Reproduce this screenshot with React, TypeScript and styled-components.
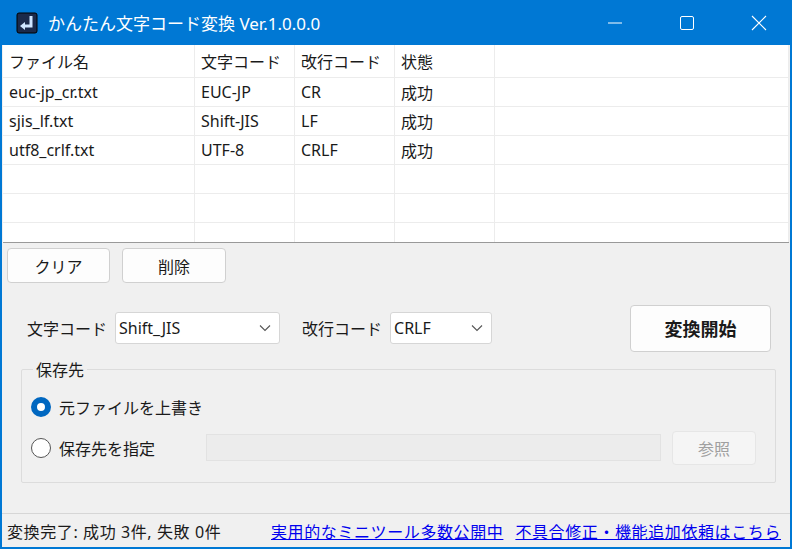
import styled, { createGlobalStyle } from "styled-components";

const Global = createGlobalStyle`
  html, body { margin: 0; padding: 0; }
  body {
    width: 792px; height: 549px; overflow: hidden;
    background: #0078d4;
    font-family: "Segoe UI", "Noto Sans", "Noto Sans CJK JP", sans-serif;
    font-size: 16px; color: #1a1a1a;
  }
`;

const Window = styled.div`
  width: 792px; height: 549px;
  display: flex; flex-direction: column;
  box-sizing: border-box;
  padding: 0 2px 2px 2px;
`;

const TitleBar = styled.div`
  height: 45px; display: flex; align-items: center;
  color: #fff; font-size: 17px; padding-left: 14px; gap: 10px;
`;

const TitleText = styled.div` flex: 1; `;

const WinBtn = styled.div`
  width: 62px; height: 45px; display: flex; align-items: center; justify-content: center;
`;

const Client = styled.div`
  flex: 1; background: #f0f0f0; display: flex; flex-direction: column;
`;

const Table = styled.div`
  height: 197px; background: #fff; border-bottom: 1px solid #999;
  margin-left: 1px; margin-right: 1px;
  display: grid;
  grid-template-columns: 192px 100px 100px 100px 1fr;
  grid-template-rows: 33px;
  grid-auto-rows: 29px;
  overflow: hidden;
`;

const Cell = styled.div`
  border-right: 1px solid #ececec; border-bottom: 1px solid #ececec;
  padding-left: 6px; display: flex; align-items: center;
  box-sizing: border-box;
`;

const Row = styled.div` display: contents; `;

const BtnRow = styled.div` display: flex; gap: 12px; padding: 5px 0 0 5px; `;

const Button = styled.button<{ $w: number; $h?: number; $bold?: boolean; $disabled?: boolean }>`
  width: ${({ $w }) => $w}px; height: ${({ $h }) => $h ?? 35}px;
  background: ${({ $disabled }) => ($disabled ? "#f5f5f5" : "#fdfdfd")};
  border: 1px solid ${({ $disabled }) => ($disabled ? "#e6e6e6" : "#d0d0d0")};
  border-radius: 4px; font-family: inherit;
  font-size: ${({ $bold }) => ($bold ? "18px" : "16px")};
  font-weight: ${({ $bold }) => ($bold ? 700 : 400)};
  color: ${({ $disabled }) => ($disabled ? "#a0a0a0" : "#1a1a1a")};
  padding: 0;
`;

const OptRow = styled.div`
  display: flex; align-items: center; padding: 22px 0 0 25px; height: 46px;
`;

const Label = styled.span<{ $ml?: number }>` margin-left: ${({ $ml }) => $ml ?? 0}px; margin-right: 8px; `;

const Select = styled.div<{ $w: number }>`
  width: ${({ $w }) => $w}px; height: 32px; box-sizing: border-box;
  background: #fff; border: 1px solid #d6d6d6; border-radius: 3px;
  display: flex; align-items: center; justify-content: space-between;
  padding: 0 8px 0 3px;
`;

const Group = styled.fieldset`
  margin: 6px 14px 0 19px; border: 1px solid #dcdcdc; border-radius: 2px;
  padding: 10px 0 14px 9px; height: 100px;
  display: flex; flex-direction: column; gap: 10px;
  legend { padding: 0 3px; margin-left: 2px; }
`;

const RadioRow = styled.div` display: flex; align-items: center; height: 31px; `;

const Radio = styled.span<{ $on?: boolean }>`
  width: 20px; height: 20px; border-radius: 50%; box-sizing: border-box;
  margin-right: 8px;
  ${({ $on }) => ($on ? "border: 6px solid #0067c0; background: #fff;" : "border: 1px solid #555; background: #fff;")}
`;

const PathInput = styled.div`
  width: 455px; height: 27px; margin-left: 51px; margin-right: 11px;
  background: #ececec; border: 1px solid #e2e2e2; box-sizing: border-box;
`;

const Spacer = styled.div` flex: 1; `;

const Status = styled.div`
  height: 33px; border-top: 1px solid #d6d6d6; display: flex; align-items: center;
  padding-left: 5px; gap: 12px;
`;

const StatusText = styled.span` width: 252px; letter-spacing: 0.6px; `;

const Link = styled.a` color: #0000ee; text-decoration: underline; letter-spacing: 0.6px; `;

const Chevron = () => (
  <svg width="12" height="8" viewBox="0 0 12 8"><path d="M1 1.5 6 6.5 11 1.5" fill="none" stroke="#555" strokeWidth="1.1" /></svg>
);

const rows = [
  ["euc-jp_cr.txt", "EUC-JP", "CR", "成功"],
  ["sjis_lf.txt", "Shift-JIS", "LF", "成功"],
  ["utf8_crlf.txt", "UTF-8", "CRLF", "成功"],
  ["", "", "", ""], ["", "", "", ""], ["", "", "", ""],
];

export default function App() {
  return (
    <>
      <Global />
      <Window>
        <TitleBar>
          <svg width="22" height="22" viewBox="0 0 22 22">
            <rect x="1" y="1" width="20" height="20" rx="2" fill="#1b2a4a" stroke="#000" />
            <path d="M15 4v10H7" fill="none" stroke="#cfe6ff" strokeWidth="3" />
            <path d="M4 14l5-4v8z" fill="#cfe6ff" />
          </svg>
          <TitleText>かんたん文字コード変換 Ver.1.0.0.0</TitleText>
          <WinBtn><svg width="16" height="16"><path d="M1 8h14" stroke="#fff" /></svg></WinBtn>
          <WinBtn><svg width="16" height="16"><rect x="1.5" y="1.5" width="13" height="13" rx="1.5" fill="none" stroke="#fff" /></svg></WinBtn>
          <WinBtn><svg width="16" height="16"><path d="M1 1l14 14M15 1 1 15" stroke="#fff" strokeWidth="1.1" /></svg></WinBtn>
        </TitleBar>
        <Client>
          <Table>
            {["ファイル名", "文字コード", "改行コード", "状態", ""].map((h, i) => (
              <Cell key={i}>{h}</Cell>
            ))}
            {rows.map((r, i) => (
              <Row key={i}>
                {[...r, ""].map((c, j) => <Cell key={j}>{c}</Cell>)}
              </Row>
            ))}
          </Table>
          <BtnRow>
            <Button $w={103}>クリア</Button>
            <Button $w={104}>削除</Button>
          </BtnRow>
          <OptRow>
            <Label>文字コード</Label>
            <Select $w={165}>Shift_JIS<Chevron /></Select>
            <Label $ml={22}>改行コード</Label>
            <Select $w={102}>CRLF<Chevron /></Select>
            <Spacer />
            <Button $w={141} $h={47} $bold style={{ marginRight: 19 }}>変換開始</Button>
          </OptRow>
          <Group>
            <legend>保存先</legend>
            <RadioRow><Radio $on />元ファイルを上書き</RadioRow>
            <RadioRow>
              <Radio />保存先を指定
              <PathInput />
              <Button $w={84} $h={34} $disabled>参照</Button>
            </RadioRow>
          </Group>
          <Spacer />
          <Status>
            <StatusText>変換完了: 成功 3件, 失敗 0件</StatusText>
            <Link>実用的なミニツール多数公開中</Link>
            <Link>不具合修正・機能追加依頼はこちら</Link>
          </Status>
        </Client>
      </Window>
    </>
  );
}
